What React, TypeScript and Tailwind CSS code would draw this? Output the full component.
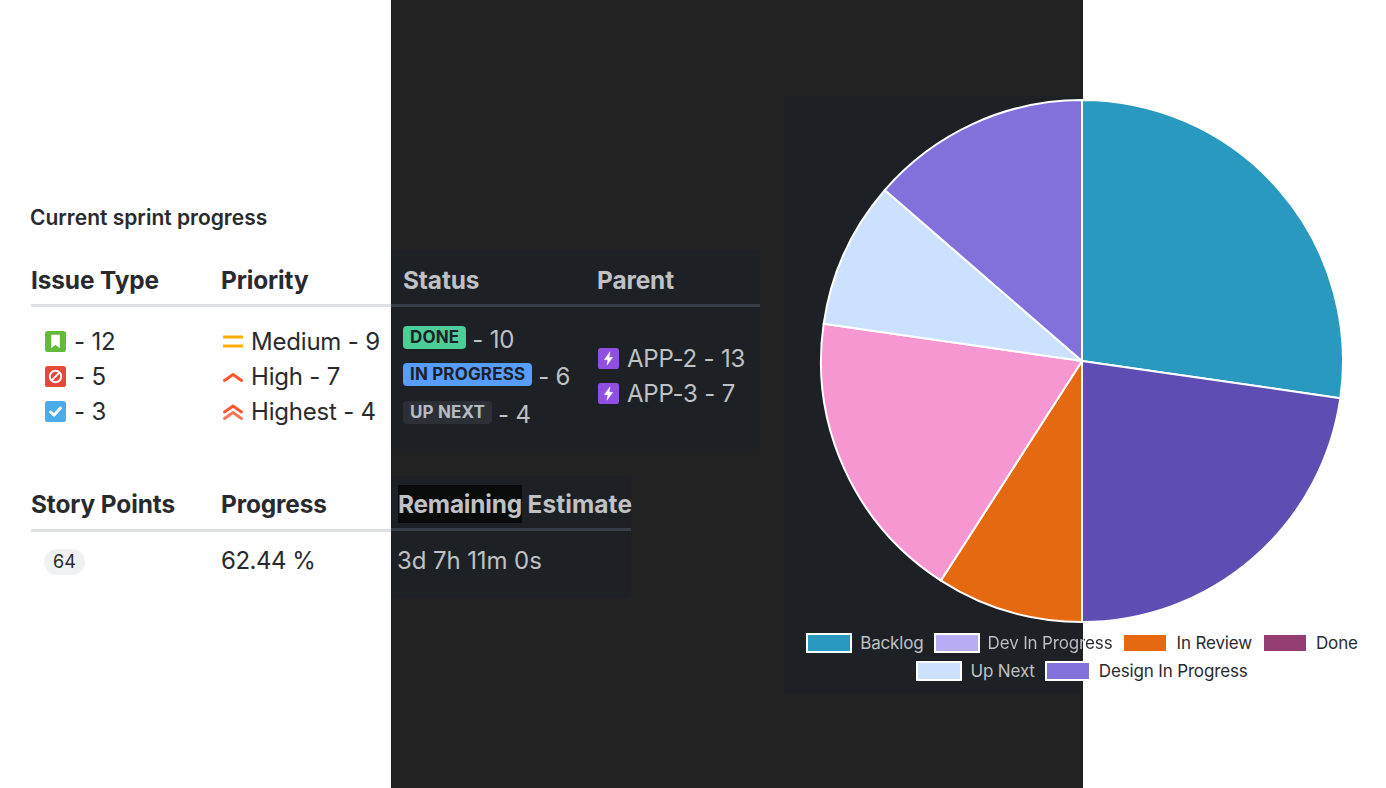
const FONT = "font-['Inter','Liberation_Sans',sans-serif]";

const slices = [
  { value: 12, color: "#2a99bf" },
  { value: 10, color: "#5e4db2" },
  { value: 4, color: "#e56910" },
  { value: 8, color: "#f797d2" },
  { value: 4, color: "#cce0ff" },
  { value: 6, color: "#8270db" },
];

function Pie() {
  const cx = 264;
  const cy = 263;
  const r = 261;
  const total = slices.reduce((s, x) => s + x.value, 0);
  let acc = 0;
  return (
    <svg width="528" height="526" viewBox="0 0 528 526" className="block">
      {slices.map((s) => {
        const a0 = (acc / total) * Math.PI * 2;
        acc += s.value;
        const a1 = (acc / total) * Math.PI * 2;
        const x0 = cx + r * Math.sin(a0);
        const y0 = cy - r * Math.cos(a0);
        const x1 = cx + r * Math.sin(a1);
        const y1 = cy - r * Math.cos(a1);
        const large = a1 - a0 > Math.PI ? 1 : 0;
        return (
          <path
            key={s.color}
            d={`M${cx} ${cy}L${x0} ${y0}A${r} ${r} 0 ${large} 1 ${x1} ${y1}Z`}
            fill={s.color}
            stroke="#fff"
            strokeWidth="2"
            strokeLinejoin="round"
          />
        );
      })}
    </svg>
  );
}

function IconBox({ bg, children }: { bg: string; children: React.ReactNode }) {
  return (
    <svg width="21" height="21" viewBox="0 0 22 22" className="shrink-0">
      <rect width="22" height="22" rx="3" fill={bg} />
      {children}
    </svg>
  );
}

const StoryIcon = () => (
  <IconBox bg="#63ba3c">
    <path d="M6.5 4h9v14l-4.5-3.6L6.5 18z" fill="#fff" />
  </IconBox>
);

const BugIcon = () => (
  <IconBox bg="#e5493a">
    <circle cx="11" cy="11" r="6" fill="none" stroke="#fff" strokeWidth="2" />
    <path d="M7 15l8-8" stroke="#fff" strokeWidth="2" />
  </IconBox>
);

const TaskIcon = () => (
  <IconBox bg="#4bade8">
    <path d="M5.8 11.5l3.6 3.4 6.8-7.6" fill="none" stroke="#fff" strokeWidth="3" strokeLinecap="round" strokeLinejoin="round" />
  </IconBox>
);

const EpicIcon = () => (
  <IconBox bg="#904ee2">
    <path d="M12.6 4L6.6 12.2h3.8L9.4 18l6-8.2h-3.8z" fill="#fff" stroke="#fff" strokeWidth=".5" strokeLinejoin="round" />
  </IconBox>
);

const MediumIcon = () => (
  <svg width="20" height="16" viewBox="0 0 20 16" className="shrink-0">
    <path d="M1 3h18M1 12h18" stroke="#ffab00" strokeWidth="3" strokeLinecap="round" />
  </svg>
);

const HighIcon = () => (
  <svg width="20" height="16" viewBox="0 0 20 16" className="shrink-0">
    <path d="M1.5 11.5L10 5.5l8.5 6" fill="none" stroke="#ff5630" strokeWidth="3" strokeLinecap="round" strokeLinejoin="round" />
  </svg>
);

const HighestIcon = () => (
  <svg width="20" height="18" viewBox="0 0 20 18" className="shrink-0">
    <path d="M1.5 9L10 3l8.5 6" fill="none" stroke="#ff5630" strokeWidth="2.8" strokeLinecap="round" strokeLinejoin="round" />
    <path d="M1.5 15.5L10 9.5l8.5 6" fill="none" stroke="#ff7452" strokeWidth="2.8" strokeLinecap="round" strokeLinejoin="round" />
  </svg>
);

function Head({ children, className = "" }: { children: React.ReactNode; className?: string }) {
  return <div className={`text-[24.4px] leading-[28px] font-bold tracking-[-0.1px] ${className}`}>{children}</div>;
}

function Row({ icon, label }: { icon: React.ReactNode; label: string }) {
  return (
    <div className="flex h-[35px] items-center gap-2 text-[24px] tracking-[-0.2px] whitespace-nowrap">
      {icon}
      <span>{label}</span>
    </div>
  );
}

function Lozenge({ label, count, className, rowClass = "h-[37px]" }: { label: string; count: string; className: string; rowClass?: string }) {
  return (
    <div className={`flex items-start gap-[6px] whitespace-nowrap ${rowClass}`}>
      <span className={`rounded-[4px] px-[7px] h-[23px] leading-[23px] text-[17px] font-bold tracking-[0.15px] ${className}`}>{label}</span>
      <span className="text-[24px] leading-[28px] tracking-[-0.2px]">{count}</span>
    </div>
  );
}

function Legend({ color, label, textClass = "" }: { color: string; label: string; textClass?: string }) {
  return (
    <div className="flex items-center gap-2">
      <span className="block h-[20px] w-[46px] border-2 border-white" style={{ backgroundColor: color }} />
      <span className={`text-[17px] leading-[24px] tracking-[-0.15px] whitespace-nowrap ${textClass}`}>{label}</span>
    </div>
  );
}

export default function App() {
  return (
    <div className={`relative flex h-[788px] w-[1386px] overflow-hidden bg-white ${FONT}`}>
      {/* left white column */}
      <div className="w-[391px] shrink-0 text-[#292a2e]">
        <div className="pl-[30px] pt-[205px] text-[21px] leading-[26px] font-semibold">Current sprint progress</div>
        <div className="mt-[35px] ml-[31px] border-b-[3px] border-[#dfe1e6] pb-[10px] flex">
          <Head className="w-[190px]">Issue Type</Head>
          <Head>Priority</Head>
        </div>
        <div className="ml-[31px] mt-[17px] flex">
          <div className="w-[190px] pl-[14px]">
            <Row icon={<StoryIcon />} label="- 12" />
            <Row icon={<BugIcon />} label="- 5" />
            <Row icon={<TaskIcon />} label="- 3" />
          </div>
          <div className="pl-[2px]">
            <Row icon={<MediumIcon />} label="Medium - 9" />
            <Row icon={<HighIcon />} label="High - 7" />
            <Row icon={<HighestIcon />} label="Highest - 4" />
          </div>
        </div>
        <div className="mt-[61px] ml-[31px] border-b-[3px] border-[#dfe1e6] pb-[11px] flex">
          <Head className="w-[190px]">Story Points</Head>
          <Head>Progress</Head>
        </div>
        <div className="ml-[31px] mt-[14px] flex items-center h-[30px]">
          <div className="w-[190px] pl-[13px] pt-[2px]">
            <span className="inline-block rounded-full bg-[#f0f1f2] px-[9px] text-[18px] leading-[26px]">64</span>
          </div>
          <span className="text-[24px] tracking-[-0.5px]">62.44 %</span>
        </div>
      </div>

      {/* dark middle column */}
      <div className="flex w-[692px] shrink-0 bg-[#222222] text-[#bfc1c4]">
        <div className="w-[393px] shrink-0 pt-[250px]">
          <div className="h-[200px] w-[369px] bg-[#1d2125]">
            <div className="flex border-b-[3px] border-[#37404a] pl-[12px] pt-[16px] pb-[10px]">
              <Head className="w-[194px]">Status</Head>
              <Head>Parent</Head>
            </div>
            <div className="flex pl-[12px] pt-[19px]">
              <div className="w-[194px]">
                <Lozenge label="DONE" count="- 10" className="bg-[#4bce97] text-[#1d2125]" />
                <Lozenge label="IN PROGRESS" count="- 6" className="bg-[#579dff] text-[#1d2125]" rowClass="h-[38px]" />
                <Lozenge label="UP NEXT" count="- 4" className="bg-[#2c3036] text-[#b6bcc4]" />
              </div>
              <div className="pl-[1px] pt-[15px]">
                <Row icon={<EpicIcon />} label="APP-2 - 13" />
                <Row icon={<EpicIcon />} label="APP-3 - 7" />
              </div>
            </div>
          </div>
          <div className="mt-[26px] h-[122px] w-[240px] bg-[#1d2125]">
            <div className="flex h-[55px] items-end border-b-[3px] border-[#37404a] pl-[7px] pb-[10px]">
              <Head className="whitespace-nowrap">
                <span className="bg-[#0a0b0b] py-[4px] tracking-[-0.2px]">Remaining</span>{" "}
                <span className="tracking-[0.1px]">Estimate</span>
              </Head>
            </div>
            <div className="pl-[6px] pt-[15px] text-[24px] leading-[30px] tracking-[-0.1px] whitespace-nowrap">3d 7h 11m 0s</div>
          </div>
        </div>
        <div className="mt-[96px] h-[599px] flex-1 bg-[#1d2125]" />
      </div>

      {/* right white column */}
      <div className="flex-1 bg-white" />

      {/* chart sits over the dark card and the right column */}
      <div className="absolute left-[802px] top-[98px] flex w-[560px] flex-col items-center">
        <Pie />
        <div className="mt-[7px] flex w-full flex-col items-center gap-[4px] text-[#bfc1c4]">
          <div className="flex gap-[10px]">
            <Legend color="#2a99bf" label="Backlog" />
            <Legend
              color="#b8acf6"
              label="Dev In Progress"
              textClass="bg-[linear-gradient(90deg,#bfc1c4_96px,#292a2e_96px)] bg-clip-text text-transparent"
            />
            <Legend color="#e56910" label="In Review" textClass="text-[#292a2e]" />
            <Legend color="#943d73" label="Done" textClass="text-[#292a2e]" />
          </div>
          <div className="flex gap-[10px]">
            <Legend color="#cce0ff" label="Up Next" />
            <Legend color="#8270db" label="Design In Progress" textClass="text-[#292a2e]" />
          </div>
        </div>
      </div>
    </div>
  );
}
